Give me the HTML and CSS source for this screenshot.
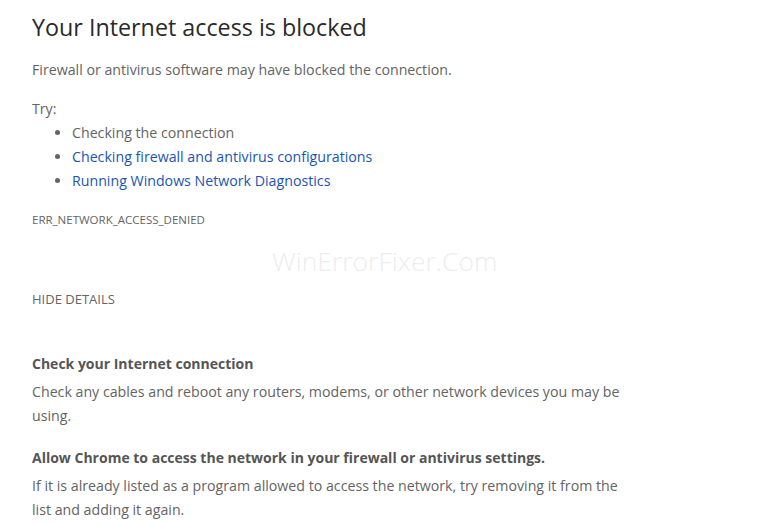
FILE: index.html
```html
<!DOCTYPE html>
<html lang="en">
<head>
<meta charset="utf-8">
<title>Your Internet access is blocked</title>
<link rel="stylesheet" href="styles.css">
</head>
<body>
<main class="page">
  <h1 class="title">Your Internet access is blocked</h1>
  <p class="lead">Firewall or antivirus software may have blocked the connection.</p>
  <div class="try">
    <p class="try-label">Try:</p>
    <ul class="try-list">
      <li>Checking the connection</li>
      <li><a class="link" href="#">Checking firewall and antivirus configurations</a></li>
      <li><a class="link" href="#">Running Windows Network Diagnostics</a></li>
    </ul>
  </div>
  <div class="code">ERR_NETWORK_ACCESS_DENIED</div>
  <div class="watermark">WinErrorFixer.Com</div>
  <div class="details-btn">HIDE DETAILS</div>
  <section class="details">
    <h2 class="detail-title">Check your Internet connection</h2>
    <p class="detail-text">Check any cables and reboot any routers, modems, or other network devices you may be using.</p>
    <h2 class="detail-title">Allow Chrome to access the network in your firewall or antivirus settings.</h2>
    <p class="detail-text">If it is already listed as a program allowed to access the network, try removing it from the list and adding it again.</p>
  </section>
</main>
</body>
</html>
```
FILE: styles.css
```css
html, body {
  margin: 0;
  padding: 0;
  background: #ffffff;
}
body {
  font-family: "Open Sans", "Noto Sans", sans-serif;
  color: #646464;
}
.page {
  padding: 10px 0 0 32px;
  width: 600px;
}
.title {
  margin: 0;
  font-size: 23.3px;
  font-weight: 500;
  line-height: 34px;
  color: #2a2a2a;
}
.lead {
  margin: 16px 0 0;
  font-size: 14.2px;
  line-height: 20px;
}
.try {
  margin-top: 19px;
  font-size: 14.2px;
}
.try-label {
  margin: 0;
  line-height: 20px;
}
.try-list {
  margin: 2px 0 0;
  padding-left: 40px;
}
.try-list li {
  line-height: 24px;
}
.link {
  color: #1a55b4;
  text-decoration: none;
}
.code {
  margin-top: 19px;
  font-size: 11.5px;
  line-height: 16px;
  color: #646464;
}
.watermark {
  margin: 18px 0 0 240px;
  font-size: 26.5px;
  font-weight: 300;
  line-height: 30px;
  color: #ededed;
}
.details-btn {
  margin-top: 15px;
  font-size: 13px;
  line-height: 16px;
  color: #646464;
}
.details {
  margin-top: 47px;
}
.detail-title {
  margin: 0;
  font-size: 14px;
  font-weight: 700;
  line-height: 20px;
  color: #555555;
}
.detail-text {
  margin: 6px 0 20px;
  font-size: 14.2px;
  line-height: 24px;
}
```
